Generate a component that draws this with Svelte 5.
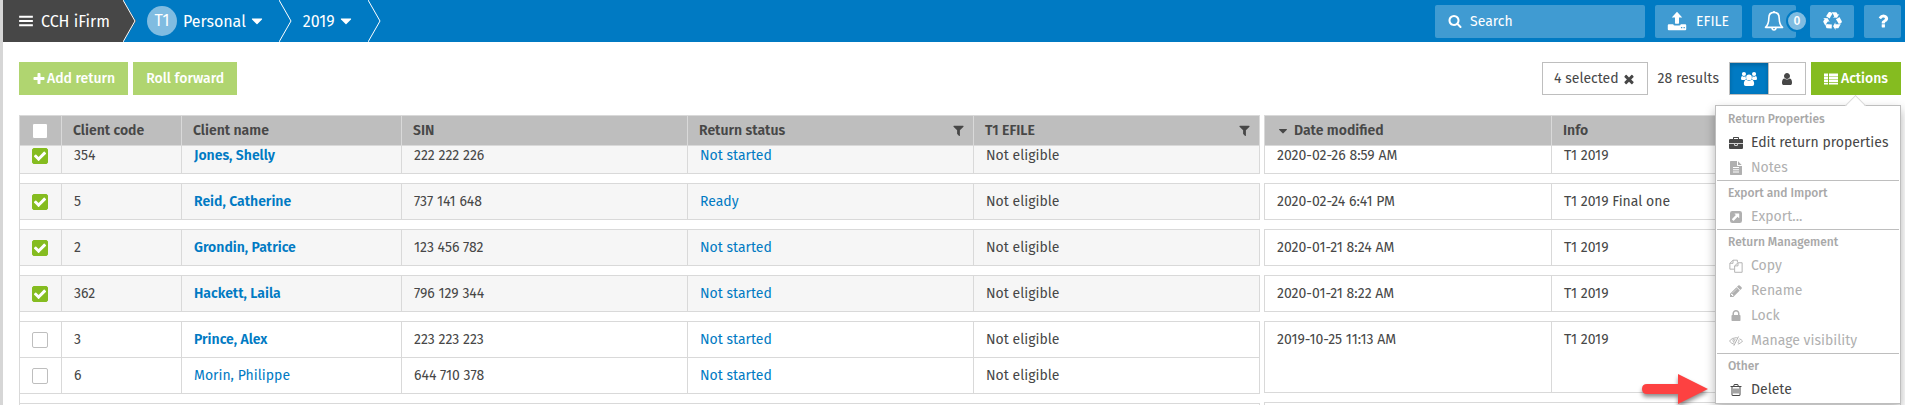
<script lang="ts">
  interface ReturnRow {
    code: string;
    name: string;
    sin: string;
    status: string;
    efile: string;
    primary: boolean;
    selected: boolean;
  }

  interface Group {
    modified: string;
    info: string;
    rows: ReturnRow[];
  }

  interface MenuItem {
    icon: string;
    label: string;
    enabled?: boolean;
  }

  function row(code: string, name: string, sin: string, status: string, selected = false, primary = true): ReturnRow {
    return { code, name, sin, status, efile: 'Not eligible', primary, selected };
  }

  let groups = $state<Group[]>([
    { modified: '2020-02-26 8:59 AM', info: 'T1 2019', rows: [row('354', 'Jones, Shelly', '222 222 226', 'Not started', true)] },
    { modified: '2020-02-24 6:41 PM', info: 'T1 2019 Final one', rows: [row('5', 'Reid, Catherine', '737 141 648', 'Ready', true)] },
    { modified: '2020-01-21 8:24 AM', info: 'T1 2019', rows: [row('2', 'Grondin, Patrice', '123 456 782', 'Not started', true)] },
    { modified: '2020-01-21 8:22 AM', info: 'T1 2019', rows: [row('362', 'Hackett, Laila', '796 129 344', 'Not started', true)] },
    {
      modified: '2019-10-25 11:13 AM',
      info: 'T1 2019',
      rows: [
        row('3', 'Prince, Alex', '223 223 223', 'Not started'),
        row('6', 'Morin, Philippe', '644 710 378', 'Not started', false, false)
      ]
    }
  ]);

  const menu: { title: string; items: MenuItem[] }[] = [
    {
      title: 'Return Properties',
      items: [
        { icon: 'briefcase', label: 'Edit return properties', enabled: true },
        { icon: 'file', label: 'Notes' }
      ]
    },
    { title: 'Export and Import', items: [{ icon: 'export', label: 'Export...' }] },
    {
      title: 'Return Management',
      items: [
        { icon: 'copy', label: 'Copy' },
        { icon: 'pencil', label: 'Rename' },
        { icon: 'lock', label: 'Lock' },
        { icon: 'eyeSlash', label: 'Manage visibility' }
      ]
    },
    { title: 'Other', items: [{ icon: 'trash', label: 'Delete', enabled: true }] }
  ];

  // all on a 1792 unit grid
  const icons: Record<string, string> = {
    bars: 'M128 320h1536v224h-1536zM128 784h1536v224h-1536zM128 1248h1536v224h-1536z',
    caret: 'M1408 704q0 26-19 45l-448 448q-19 19-45 19t-45-19l-448-448q-19-19-19-45t19-45 45-19h896q26 0 45 19t19 45z',
    search:
      'M1216 832q0-185-131.500-316.500t-316.500-131.500-316.500 131.500-131.500 316.500 131.500 316.500 316.500 131.500 316.500-131.500 131.500-316.500zm512 832q0 52-38 90t-90 38q-54 0-90-38l-343-342q-179 124-399 124-143 0-273.500-55.500t-225-150-150-225-55.500-273.500 55.500-273.500 150-225 225-150 273.500-55.500 273.500 55.500 225 150 150 225 55.500 273.500q0 220-124 399l343 343q37 37 37 90z',
    upload:
      'M896 64l470 520h-290v500q0 60-60 60h-240q-60 0-60-60v-500h-290zM160 1180h400q20 130 140 130h392q120 0 140-130h400q90 0 90 90v368q0 90-90 90h-1472q-90 0-90-90v-368q0-90 90-90zM1250 1430v120h120v-120zM1480 1430v120h120v-120z',
    recycle:
      'M836 1169l-15 368-2 22-420-29q-36-3-67-31.500t-47-65.500q-11-27-14.500-55t4-65 12-55 21.500-64 19-53q78 12 509 28zm-387-586l180 379-147-92q-63 72-111.500 144.500t-72.500 125-39.500 94.500-18.500 63l-4 21-190-357q-17-26-18-56t6-47l8-18q35-63 114-188l-140-86zm1231 517l-188 359q-12 29-36.500 46.500t-43.500 20.500l-18 4q-71 7-219 12l8 164-230-367 211-362 7 173q170 16 283 5t170-33zm-785-924q-47 63-265 435l-317-187-19-12 225-356q20-31 60-45t80-10q24 2 48.500 12t42 21 41.500 33 36 34.500 36 39.500 32 35zm655 307l212 363q18 37 12.500 76t-27.500 74q-13 20-33 37t-38 28-48.500 22-47 16-51.500 14-46 12q-34-72-265-436l313-195zm-143-226l142-83-220 373-419-20 151-86q-34-89-75-166t-75.500-123.500-64.500-80-47-46.500l-17-13 405 1q31-3 58 10.500t39 28.500l11 15q39 61 112 190z',
    question:
      'M1088 1256v240q0 16-12 28t-28 12h-240q-16 0-28-12t-12-28v-240q0-16 12-28t28-12h240q16 0 28 12t12 28zm316-600q0 54-15.500 101t-35 76.500-55 59.500-57.500 43.500-61 35.500q-41 23-68.500 65t-27.500 67q0 17-12 32.500t-28 15.500h-240q-15 0-25.500-18.500t-10.500-37.500v-45q0-83 65-156.500t143-108.500q59-27 84-56t25-76q0-42-46.500-74t-107.500-32q-65 0-108 29-35 25-107 115-13 16-31 16-12 0-25-8l-164-125q-13-10-15.500-25t5.500-28q160-266 464-266 80 0 161 31t146 83 106 127.500 41 158.500z',
    plus: 'M1600 736v192q0 40-28 68t-68 28h-416v416q0 40-28 68t-68 28h-192q-40 0-68-28t-28-68v-416h-416q-40 0-68-28t-28-68v-192q0-40 28-68t68-28h416v-416q0-40 28-68t68-28h192q40 0 68 28t28 68v416h416q40 0 68 28t28 68z',
    times:
      'M1490 1322q0 40-28 68l-136 136q-28 28-68 28t-68-28l-294-294-294 294q-28 28-68 28t-68-28l-136-136q-28-28-28-68t28-68l294-294-294-294q-28-28-28-68t28-68l136-136q28-28 68-28t68 28l294 294 294-294q28-28 68-28t68 28l136 136q28 28 28 68t-28 68l-294 294 294 294q28 28 28 68z',
    check:
      'M1671 566q0 40-28 68l-724 724-136 136q-28 28-68 28t-68-28l-136-136-362-362q-28-28-28-68t28-68l136-136q28-28 68-28t68 28l294 295 656-657q28-28 68-28t68 28l136 136q28 28 28 68z',
    filter: 'M1595 295q17 41-14 70l-493 493v742q0 42-39 59-13 5-25 5-27 0-45-19l-256-256q-19-19-19-45v-486l-493-493q-31-29-14-70 17-39 59-39h1280q42 0 59 39z',
    list: 'M0 192h512v310h-512zM640 192h1152v310h-1152zM0 582h512v310h-512zM640 582h1152v310h-1152zM0 972h512v310h-512zM640 972h1152v310h-1152zM0 1362h512v246h-512zM640 1362h1152v246h-1152z',
    user: 'M1536 1399q0 109-62.500 187t-150.500 78h-854q-88 0-150.500-78t-62.500-187q0-85 8.500-160.500t31.500-152 58.500-131 94-89 134.500-34.500q131 128 313 128t313-128q76 0 134.500 34.500t94 89 58.500 131 31.500 152 8.500 160.500zm-256-887q0 159-112.500 271.500t-271.500 112.500-271.500-112.500-112.500-271.500 112.500-271.500 271.500-112.500 271.500 112.500 112.500 271.500z',
    users:
      'M896 400a320 320 0 1 1 0 640 320 320 0 1 1 0-640zM600 990q120 120 296 120t296-120q280 20 280 470 0 220-220 220h-712q-220 0-220-220 0-450 280-470zM330 110a230 230 0 1 1 0 460 230 230 0 1 1 0-460zM1462 110a230 230 0 1 1 0 460 230 230 0 1 1 0-460zM130 570q90 80 200 80 90 0 190-50-10 220 80 330-110 0-190 90h-260q-150 0-150-130 0-320 130-320zM1662 570q-90 80-200 80-90 0-190-50 10 220-80 330 110 0 190 90h260q150 0 150-130 0-320-130-320z',
    briefcase:
      'M640 256h512v128h-512zM1792 1024v480q0 66-47 113t-113 47h-1472q-66 0-113-47t-47-113v-480h672v160q0 26 19 45t45 19h320q26 0 45-19t19-45v-160zM1024 1024v128h-256v-128zM1792 544v384h-1792v-384q0-66 47-113t113-47h352v-160q0-40 28-68t68-28h576q40 0 68 28t28 68v160h352q66 0 113 47t47 113z',
    file: 'M1152 512v-472q22 14 36 28l408 408q14 14 28 36zM1024 544q0 40 28 68t68 28h544v1056q0 40-28 68t-68 28h-1344q-40 0-68-28t-28-68v-1600q0-40 28-68t68-28h800zM512 768v128h768v-128zM512 1050v128h768v-128zM512 1330v128h768v-128z',
    export:
      'M416 128h960q288 0 288 288v960q0 288-288 288h-960q-288 0-288-288v-960q0-288 288-288zM740 440q-50 20-12 62l150 150-490 490q-30 30 0 60l160 160q30 30 60 0l490-490 150 150q50 40 60-12v-522q0-48-48-48z',
    pencil:
      'M491 1536l91-91-235-235-91 91v107h128v128h107zm523-928q0-22-22-22-10 0-17 7l-542 542q-7 7-7 17 0 22 22 22 10 0 17-7l542-542q7-7 7-17zm-54-192l416 416-832 832h-416v-416zm683 96q0 53-37 90l-166 166-416-416 166-165q36-38 90-38 53 0 91 38l235 234q37 39 37 91z',
    lock: 'M640 768h512v-192q0-106-75-181t-181-75-181 75-75 181v192zm832 96v576q0 40-28 68t-68 28h-960q-40 0-68-28t-28-68v-576q0-40 28-68t68-28h32v-192q0-184 132-316t316-132 316 132 132 316v192h32q40 0 68 28t28 68z',
    trash:
      'M704 736v576q0 14-9 23t-23 9h-64q-14 0-23-9t-9-23v-576q0-14 9-23t23-9h64q14 0 23 9t9 23zm256 0v576q0 14-9 23t-23 9h-64q-14 0-23-9t-9-23v-576q0-14 9-23t23-9h64q14 0 23 9t9 23zm256 0v576q0 14-9 23t-23 9h-64q-14 0-23-9t-9-23v-576q0-14 9-23t23-9h64q14 0 23 9t9 23zm128 724v-948h-896v948q0 22 7 40.500t14.500 27 10.500 8.500h832q3 0 10.500-8.500t14.500-27 7-40.500zm-672-1076h448l-48-117q-7-9-17-11h-317q-10 2-17 11zm928 32v64q0 14-9 23t-23 9h-96v948q0 83-47 143.500t-113 60.500h-832q-66 0-113-58.500t-47-141.500v-952h-96q-14 0-23-9t-9-23v-64q0-14 9-23t23-9h309l70-167q15-37 54-63t79-26h320q40 0 79 26t54 63l70 167h309q14 0 23 9t9 23z'
  };

  // outlined icons, drawn with a stroke
  const lineIcons: Record<string, string> = {
    bell: 'M896 150v90M260 1370q250-220 250-700 0-420 386-420t386 420q0 480 250 700zM740 1400q20 170 156 170t156-170',
    copy: 'M1150 480h530v1220h-960v-820zM1150 480v400h-430M660 1300h-548v-750l400-400h560v280M512 150v400h-400',
    eyeSlash: 'M700 1330q-380-80-640-434 300-420 836-420 100 0 200 24M1330 610q250 100 402 286-220 330-600 400M1220 320l-600 1180M560 620q-160 260 100 520M1260 720q80 220-120 420M800 640q-140 120-60 320'
  };

  const allSelected = $derived(groups.every((g) => g.rows.every((r) => r.selected)));
  const selectedCount = $derived(groups.flatMap((g) => g.rows).filter((r) => r.selected).length);

  function selectAll(value: boolean) {
    for (const g of groups) for (const r of g.rows) r.selected = value;
  }
</script>

{#snippet icon(name: string, size = 14)}
  {#if lineIcons[name]}
    <svg class="line" width={size} height={size} viewBox="0 0 1792 1792" aria-hidden="true"><path d={lineIcons[name]} /></svg>
  {:else}
    <svg width={size} height={size} viewBox="0 0 1792 1792" aria-hidden="true"><path fill-rule="evenodd" d={icons[name]} /></svg>
  {/if}
{/snippet}

{#snippet chevron(dark = false)}
  <svg width="14" height="42" viewBox="0 0 14 42" aria-hidden="true">
    {#if dark}<path d="M0 0L13 21L0 42z" fill="#474747" />{/if}
    <path d="M0 0L12 21L0 42" fill="none" stroke="#fff" />
  </svg>
{/snippet}

<div class="app">
  <header>
    <button class="brand">{@render icon('bars', 16)}CCH iFirm</button>
    {@render chevron(true)}
    <button class="crumb"><span class="avatar">T1</span>Personal{@render icon('caret', 18)}</button>
    {@render chevron()}
    <button class="crumb">2019{@render icon('caret', 18)}</button>
    {@render chevron()}

    <div class="tools">
      <label class="search">
        {@render icon('search')}
        <input type="text" placeholder="Search" aria-label="Search" />
      </label>
      <button class="tool efile">{@render icon('upload', 20)}EFILE</button>
      <button class="tool bell" aria-label="Notifications">{@render icon('bell', 24)}<span class="count">0</span></button>
      <button class="tool" aria-label="Recycle bin">{@render icon('recycle', 19)}</button>
      <button class="tool help" aria-label="Help">{@render icon('question', 18)}</button>
    </div>
  </header>

  <main>
    <div class="toolbar">
      <button class="btn pale">{@render icon('plus')}Add return</button>
      <button class="btn pale">Roll forward</button>
      <button class="btn outline" onclick={() => selectAll(false)}>{selectedCount} selected{@render icon('times')}</button>
      <span class="results">28 results</span>
      <div class="toggle">
        <button class="active" aria-label="Group by household">{@render icon('users', 16)}</button>
        <button aria-label="Individuals">{@render icon('user')}</button>
      </div>
      <div class="actions">
        <button class="btn green">{@render icon('list')}Actions</button>
        <div class="menu">
          {#each menu as section}
            <section>
              <h2>{section.title}</h2>
              {#each section.items as item}
                <button disabled={!item.enabled}>{@render icon(item.icon)}{item.label}</button>
              {/each}
            </section>
          {/each}
          <svg class="pointer" width="66" height="34" viewBox="0 0 66 34" aria-hidden="true">
            <path class="shade" d="M5 13H36V3L66 18L36 33V23H5Q0 23 0 18T5 13z" />
            <path d="M5 10H36V0L66 15L36 30V20H5Q0 20 0 15T5 10z" />
          </svg>
        </div>
      </div>
    </div>

    <div class="grid">
      <div class="pane returns">
        <table>
          <colgroup><col class="c-check" /><col class="c-code" /><col class="c-name" /><col /><col /><col /></colgroup>
          <thead>
            <tr>
              <th class="check">
                <label><input type="checkbox" aria-label="Select all" checked={allSelected} onchange={(e) => selectAll(e.currentTarget.checked)} /></label>
              </th>
              <th>Client code</th>
              <th>Client name</th>
              <th>SIN</th>
              <th><div class="filtered">Return status{@render icon('filter', 13)}</div></th>
              <th><div class="filtered">T1 EFILE{@render icon('filter', 13)}</div></th>
            </tr>
          </thead>
        </table>
        <div class="scroll">
          <table>
            <colgroup><col class="c-check" /><col class="c-code" /><col class="c-name" /><col /><col /><col /></colgroup>
            {#each groups as group}
              <tbody>
                {#each group.rows as r}
                  <tr class:selected={r.selected}>
                    <td class="check">
                      <label>
                        <input type="checkbox" aria-label="Select {r.name}" bind:checked={r.selected} />
                        {#if r.selected}{@render icon('check')}{/if}
                      </label>
                    </td>
                    <td>{r.code}</td>
                    <td><a href="#client" class:primary={r.primary}>{r.name}</a></td>
                    <td>{r.sin}</td>
                    <td><a href="#status">{r.status}</a></td>
                    <td>{r.efile}</td>
                  </tr>
                {/each}
                <tr class="gap"><td colspan="6"></td></tr>
              </tbody>
            {/each}
            <tbody><tr><td colspan="6"></td></tr></tbody>
          </table>
        </div>
      </div>

      <div class="pane details">
        <table>
          <colgroup><col class="c-date" /><col /></colgroup>
          <thead>
            <tr>
              <th><div class="sorted">{@render icon('caret')}Date modified</div></th>
              <th>Info</th>
            </tr>
          </thead>
        </table>
        <div class="scroll">
          <table>
            <colgroup><col class="c-date" /><col /></colgroup>
            {#each groups as group}
              <tbody>
                {#each group.rows as _, i}
                  <tr class="detail">
                    {#if i === 0}
                      <td rowspan={group.rows.length}>{group.modified}</td>
                      <td rowspan={group.rows.length}>{group.info}</td>
                    {/if}
                  </tr>
                {/each}
                <tr class="gap"><td colspan="2"></td></tr>
              </tbody>
            {/each}
            <tbody><tr><td colspan="2"></td></tr></tbody>
          </table>
        </div>
      </div>
    </div>
  </main>
</div>

<style>
  :global(body) {
    margin: 0;
    font-family: 'Fira Sans', Roboto, sans-serif;
    font-size: 14px;
    color: #474747;
  }

  .app {
    display: flex;
    flex-direction: column;
    height: 100vh;
    box-sizing: border-box;
    border-left: 3px solid #d6d6d6;
    overflow: hidden;
    background: #fff;
  }

  button {
    display: flex;
    align-items: center;
    border: 0;
    margin: 0;
    padding: 0;
    background: none;
    font: inherit;
    color: inherit;
    white-space: nowrap;
    cursor: pointer;
  }

  svg {
    flex: none;
    fill: currentColor;
  }

  svg.line {
    fill: none;
    stroke: currentColor;
    stroke-width: 120;
    stroke-linejoin: round;
  }

  a {
    color: #007ac3;
    text-decoration: none;
  }

  header {
    display: flex;
    flex: none;
    height: 42px;
    padding-right: 4px;
    background: #007ac3;
    color: #fff;
    font-size: 16px;
  }

  .brand {
    gap: 7px;
    padding: 0 13px 0 15px;
    background: #474747;
  }

  .crumb {
    gap: 2px;
    padding: 0 13px 0 10px;
  }

  .avatar {
    width: 30px;
    margin-right: 4px;
    border-radius: 50%;
    background: #80bce1;
    line-height: 30px;
    text-align: center;
  }

  .tools {
    display: flex;
    align-items: center;
    gap: 10px;
    margin-left: auto;
    font-size: 14px;
  }

  .search,
  .tool {
    height: 33px;
    border-radius: 2px;
    background: #409bd2;
    box-sizing: border-box;
  }

  .search {
    display: flex;
    align-items: center;
    gap: 8px;
    width: 210px;
    padding: 0 13px;
  }

  .search input {
    flex: 1;
    min-width: 0;
    border: 0;
    padding: 0;
    outline: none;
    background: none;
    font: inherit;
    color: #fff;
  }

  .search input::placeholder {
    color: #fff;
    opacity: 1;
  }

  .tool {
    position: relative;
    justify-content: center;
    min-width: 44px;
  }

  .efile {
    gap: 9px;
    padding: 0 13px 0 12px;
  }

  .bell {
    margin-right: 4px;
  }

  .count {
    position: absolute;
    top: 5px;
    left: 34px;
    width: 18px;
    border: 2px solid #007ac3;
    border-radius: 50%;
    background: #80bce1;
    font-size: 12px;
    font-weight: 500;
    line-height: 18px;
    text-align: center;
  }

  .help {
    min-width: 37px;
  }

  main {
    display: flex;
    flex: 1;
    flex-direction: column;
    min-height: 0;
    padding: 20px 4px 0 16px;
  }

  .toolbar {
    display: flex;
    align-items: center;
    gap: 5px;
    margin-bottom: 20px;
  }

  .btn {
    gap: 3px;
    height: 33px;
    padding: 0 13px;
    box-sizing: border-box;
    color: #fff;
    font-weight: 500;
  }

  .pale {
    gap: 1px;
    background: #b0d570;
  }

  .green {
    background: #85bc20;
  }

  .outline {
    margin-left: auto;
    padding: 0 11px;
    border: 1px solid #bebebe;
    background: #fff;
    color: #474747;
    font-weight: 400;
  }

  .results {
    margin: 0 5px;
  }

  .toggle {
    display: flex;
    height: 31px;
    border: 1px solid #bebebe;
  }

  .toggle button {
    justify-content: center;
    width: 36px;
  }

  .toggle .active {
    width: 39px;
    border-right: 1px solid #bebebe;
    background: #007ac3;
    box-shadow: inset 0 2px 4px rgba(0, 0, 0, 0.2);
    color: #fff;
  }

  .actions {
    position: relative;
  }

  .menu {
    position: absolute;
    top: 43px;
    right: 0;
    z-index: 2;
    width: 182px;
    padding: 1px;
    border: 1px solid #bebebe;
    background: #fff;
    box-shadow: 0 5px 10px rgba(0, 0, 0, 0.3);
  }

  .menu::before {
    content: '';
    position: absolute;
    top: -8px;
    right: 37px;
    width: 14px;
    height: 14px;
    border: 1px solid #d9d9d9;
    border-width: 1px 0 0 1px;
    background: linear-gradient(135deg, #fff 50%, transparent 50%);
    transform: rotate(45deg);
  }

  .menu section + section {
    border-top: 1px solid #bebebe;
  }

  .menu h2 {
    margin: 0;
    padding: 2px 11px 0;
    color: #a8a8a8;
    font-size: 12px;
    font-weight: 500;
    line-height: 21px;
  }

  .menu button {
    gap: 8px;
    width: 100%;
    height: 25px;
    padding: 0 12px;
  }

  .menu button:disabled {
    color: #b0b0b0;
    cursor: default;
  }

  .pointer {
    position: absolute;
    right: 192px;
    bottom: -5px;
    overflow: visible;
    fill: #fd4141;
  }

  .pointer .shade {
    fill: rgba(0, 0, 0, 0.45);
    filter: blur(2px);
  }

  .grid {
    display: flex;
    flex: 1;
    gap: 4px;
    min-height: 0;
  }

  .pane {
    display: flex;
    flex-direction: column;
    min-width: 0;
  }

  .returns {
    flex: 1241 1 0;
  }

  .details {
    flex: 637 1 0;
  }

  table {
    width: 100%;
    border-spacing: 0;
    table-layout: fixed;
  }

  .c-check {
    width: 43px;
  }

  .c-code {
    width: 120px;
  }

  .c-name {
    width: 220px;
  }

  .c-date {
    width: 288px;
  }

  th {
    height: 29px;
    padding: 0 12px 0 11px;
    border: 1px solid #d9d9d9;
    border-left-width: 0;
    background: #bebebe;
    font-weight: 600;
    text-align: left;
  }

  th:first-child,
  td:first-child {
    border-left-width: 1px;
  }

  .filtered,
  .sorted {
    display: flex;
    align-items: center;
  }

  .filtered {
    justify-content: space-between;
    margin-right: -4px;
  }

  .sorted {
    gap: 4px;
  }

  .scroll {
    flex: 1;
    min-height: 0;
    overflow: hidden;
  }

  /* the first group sits partly under the header */
  .scroll table {
    margin-top: -9px;
  }

  td {
    height: 19px;
    padding: 8px 12px;
    border: solid #d9d9d9;
    border-width: 0 1px 1px 0;
    line-height: 19px;
    vertical-align: top;
  }

  tr.detail {
    height: 36px;
  }

  tbody tr:first-child td {
    border-top-width: 1px;
  }

  tr.selected td {
    background: #f6f6f6;
  }

  tr.gap {
    height: 9px;
  }

  tr.gap td {
    height: 9px;
    padding: 0;
    border-width: 0;
  }

  .returns tr.gap td {
    border-left-width: 1px;
  }

  .primary {
    font-weight: 600;
  }

  .check {
    padding-right: 0;
    padding-left: 12px;
  }

  .check label {
    display: grid;
    width: 16px;
    height: 16px;
    margin: 2px 0 1px;
  }

  .check input {
    grid-area: 1 / 1;
    width: 16px;
    height: 16px;
    margin: 0;
    border: 1px solid #bebebe;
    border-radius: 2px;
    background: #fff;
    appearance: none;
  }

  .check input:checked {
    border-color: #85bc20;
    background: #85bc20;
  }

  .check svg {
    grid-area: 1 / 1;
    place-self: center;
    z-index: 1;
    color: #fff;
    pointer-events: none;
  }
</style>
